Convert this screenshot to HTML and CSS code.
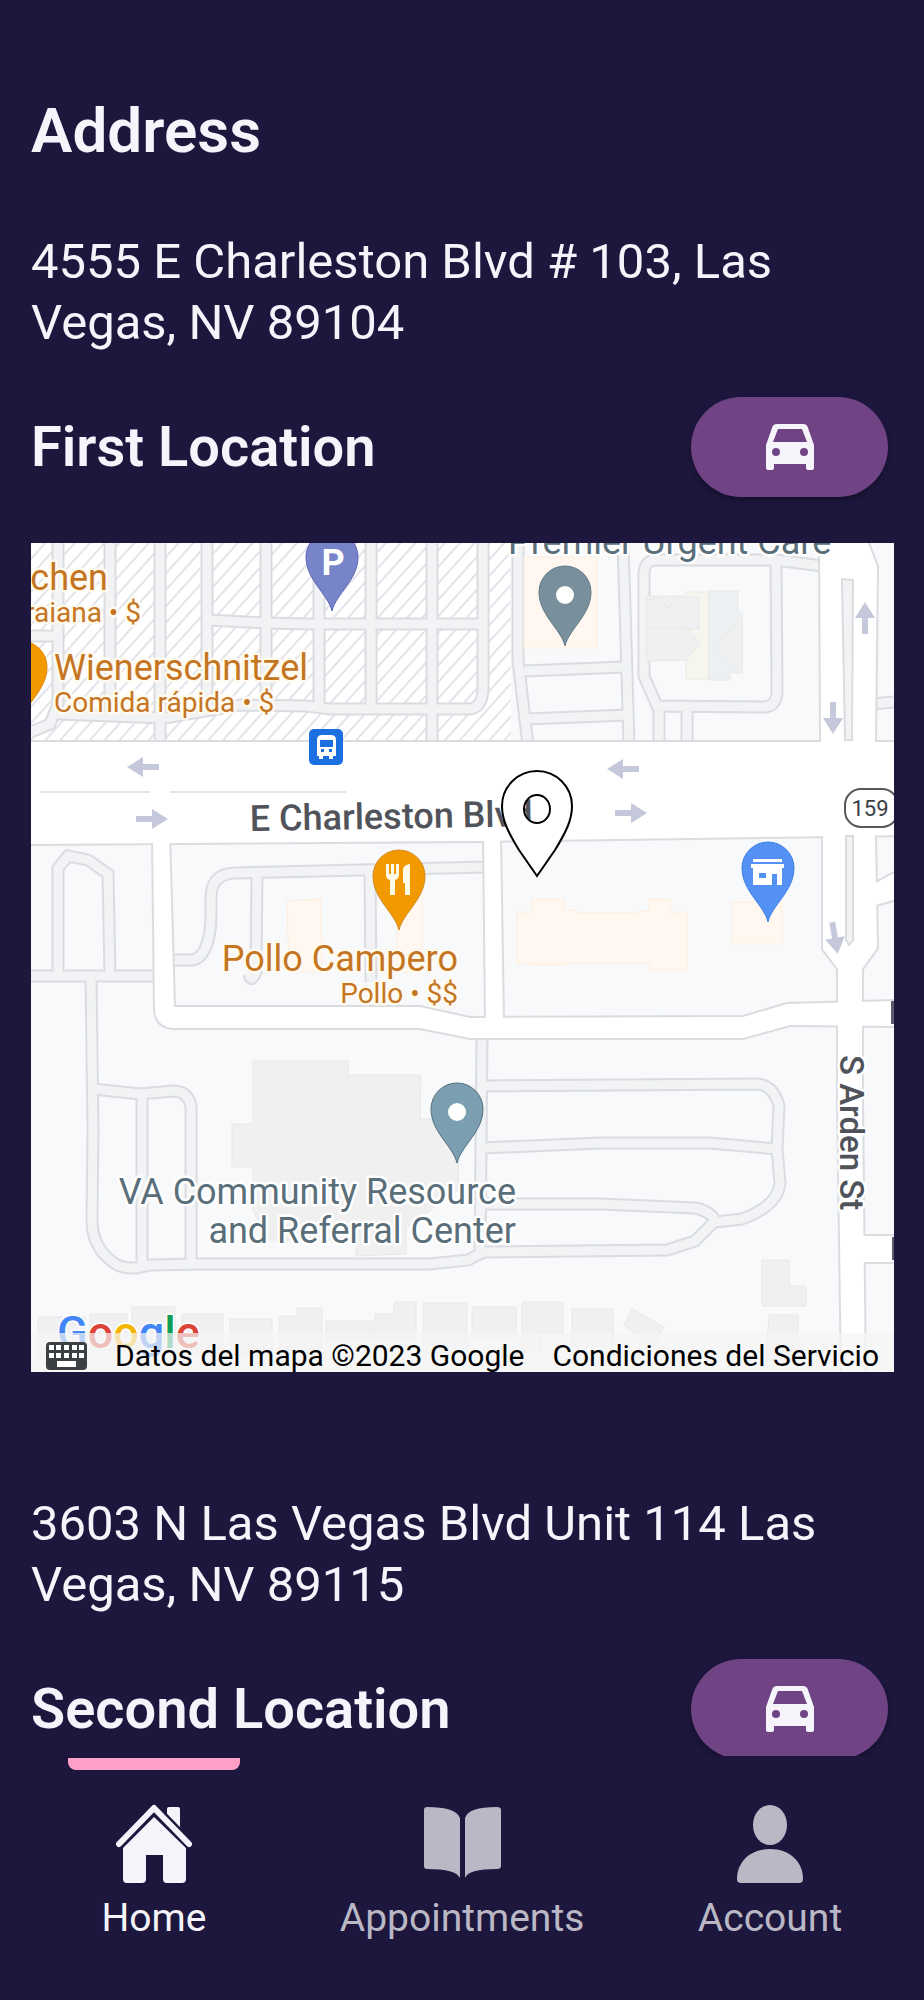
FILE: index.html
```html
<!DOCTYPE html>
<html lang="en">
<head>
  <meta charset="UTF-8" />
  <meta name="viewport" content="width=device-width, initial-scale=1" />
  <title>Address</title>
  <link rel="stylesheet" href="styles.css">
</head>
<body>
  <main class="content">
    <h1>Address</h1>

    <section class="location">
      <p class="address">4555 E Charleston Blvd # 103, Las Vegas, NV 89104</p>
      <div class="location-row">
        <h2>First Location</h2>
        <button class="drive-button" type="button" aria-label="Directions to first location">
          <svg class="car" viewBox="0 0 50 46">
            <path fill-rule="evenodd" d="M12 0h26q4 0 5 4l6 17v23q0 2-2 2h-4q-2 0-2-2v-4H9v4q0 2-2 2H3q-2 0-2-2V21L7 4q1-4 5-4zM13 5L8 18h34L37 5zM11 24a4 4 0 1 0 0 8 4 4 0 0 0 0-8zM39 24a4 4 0 1 0 0 8 4 4 0 0 0 0-8z"/>
          </svg>
        </button>
      </div>

      <div class="map">
        <svg class="map-canvas" viewBox="31 543 863 829">
          <defs>
            <pattern id="hatch" width="11" height="11" patternUnits="userSpaceOnUse" patternTransform="rotate(42)">
              <path d="M1 0v11" stroke="#e2e4e9" stroke-width="2"/>
            </pattern>
            <path id="pin" d="M0 51C-4 34-26 20-26-3A26 26 0 0 1 26-3C26 20 4 34 0 51z"/>
            <path id="arrow" d="M-16-3H0V-10L16 0 0 10V3H-16z"/>

            <!-- parking lanes -->
            <g id="lanes" fill="none">
              <path d="M31 636H58M58 543V704L50 724 31 732"/>
              <path d="M110 543V715M160 543V745M207 543V708M266 543V704M319 543V706M371 543V708M432 543V745"/>
              <path d="M207 620L267 623 310 624 483 624"/>
              <path d="M58 714L165 718 240 705 306 706 330 709H468Q482 709 483 690V543"/>
              <path d="M518 543V660L528 745M623 543L626 640 629 745M524 671L624 667M526 719L627 715"/>
              <path d="M822 566L776 560H656Q644 560 644 575V676L657 706 765 707Q777 706 777 690L776 560M659 706V745M687 707V745"/>
              <path d="M872 704L894 702"/>
              <path d="M31 976H158M58 976V868L68 856 88 860 108 874 110 976"/>
              <path d="M91 976L93 1130 92 1220Q92 1245 110 1260 120 1269 136 1268L150 1265 200 1264H430L468 1260 484 1252 667 1250 695 1241 714 1222"/>
              <path d="M93 1089L140 1094 173 1091Q188 1091 191 1106V1264M142 1094V1266"/>
              <path d="M170 960H192C208 958 211 930 211 915V896Q212 873 236 873L486 867M257 873L256 972Q251 984 249 974M370 872L371 982"/>
              <path d="M482 1036L480 1255M480 1086L758 1084Q774 1086 779 1106L777 1149 780 1183Q778 1206 742 1219L715 1222"/>
              <path d="M482 1148L600 1143 710 1143 777 1149M482 1204H600L695 1208Q711 1211 716 1222"/>
            </g>

            <!-- streets -->
            <g id="streets">
              <path d="M20 742H904V835L480 841 20 844z"/>
              <path d="M153 835H169L174 1007H420L470 1018 743 1017 787 1004 894 1001V1026L790 1025 743 1038H470L420 1028H172Q156 1026 155 1010z"/>
              <path d="M484 835H500L503 1022H486z"/>
              <path d="M820 533H864L877 566 875 742V835L877 948 862 969V1100L865 1382H842L838 1100V969L823 949V835L821 742z"/>
              <path d="M872 885L904 868V897L872 906zM860 1236H894V1262H860z"/>
            </g>
          </defs>

          <rect class="land" x="31" y="543" width="863" height="829"/>
          <path fill="#fff" d="M31 543H510L511 741H31z"/>
          <path fill="url(#hatch)" d="M31 543H510L511 741H31z"/>
          <path fill="none" stroke="#dadce0" stroke-width="2" d="M31 741H511"/>

          <use href="#lanes" class="lane-edge"/>
          <use href="#lanes" class="lane"/>
          <use href="#streets" class="street-edge"/>
          <use href="#streets" class="street"/>
          <path class="median" d="M842 579L853 580 852 740H845zM846 836H853V940L849 945 846 940z"/>
          <path stroke="#e6e7e9" stroke-width="2" d="M40 792H150M170 792H346"/>
          <path fill="#5a5c6c" d="M891 1001h3v23h-3zM892 1237h2v23h-2z"/>

          <!-- buildings -->
          <g class="shop-building">
            <path d="M524 557H597V648H524zM287 901L321 899 322 972H289zM397 895H422V972H397zM732 902H782V944H732z"/>
            <path d="M517 912H532V899H564V910H577V913H637V911H649V899H670V912H687V970H650V963H565V965H532V964H517z"/>
          </g>
          <g class="building">
            <path d="M647 596H699V629L686 660 646 661z"/>
            <path fill="#f6f5ee" d="M686 592H709V679H686z"/>
            <path fill="#edf0f2" d="M709 591H738V612H742V673H730V680H709z"/>
            <path d="M742 618L715 646 742 673zM646 628H687L700 643 686 660M647 600L659 598 668 608 680 597H699V629H687"/>
            <path d="M253 1061H348V1075H421L420 1119H460L458 1190 406 1228V1254L356 1256V1240H268L253 1210V1167H232V1124H253z"/>
            <path d="M38 1317H85V1357H38zM90 1314H127V1350H90zM132 1307H175V1350H132zM182 1314H223V1353H182zM230 1319H272V1355H230zM279 1316H297V1308H322V1350H279zM326 1321H373V1340H326zM375 1314H394V1302H416V1340H375zM423 1303H467V1353H423zM472 1307H516V1337H472zM522 1302H563V1333H541V1352H522zM572 1309H613V1347H572zM632 1309L664 1327 653 1347 624 1325z"/>
            <path d="M762 1260H789V1286H806V1306H762zM769 1315H798V1341H804V1360H766z"/>
          </g>

          <g class="arrows">
            <use href="#arrow" transform="translate(143 767) rotate(180)"/>
            <use href="#arrow" transform="translate(152 819)"/>
            <use href="#arrow" transform="translate(623 769) rotate(180)"/>
            <use href="#arrow" transform="translate(631 813)"/>
            <use href="#arrow" transform="translate(865 618) rotate(-90)"/>
            <use href="#arrow" transform="translate(833 718) rotate(90)"/>
            <use href="#arrow" transform="translate(835 938) rotate(80)"/>
          </g>

          <!-- place names -->
          <g class="label food">
            <text x="108" y="590" text-anchor="end">chen</text>
            <text class="small" x="141" y="622" text-anchor="end">raiana • $</text>
            <text x="54" y="680">Wienerschnitzel</text>
            <text class="small" x="54" y="712">Comida rápida • $</text>
            <text x="458" y="971" text-anchor="end">Pollo Campero</text>
            <text class="small" x="458" y="1003" text-anchor="end">Pollo • $$</text>
          </g>
          <g class="label place">
            <text x="508" y="554">Premier Urgent Care</text>
            <text x="516" y="1204" text-anchor="end">VA Community Resource</text>
            <text x="516" y="1243" text-anchor="end">and Referral Center</text>
          </g>
          <g class="label road-name">
            <text transform="translate(250 831) rotate(-1)">E Charleston Blvd</text>
            <text class="street-name" transform="translate(840 1055) rotate(90)">S Arden St</text>
          </g>

          <!-- pins -->
          <g transform="translate(332 560)">
            <use href="#pin" fill="#7884ca" stroke="#5b67b4"/>
            <text class="parking" x="1" y="15" text-anchor="middle">P</text>
          </g>
          <g transform="translate(565 595)">
            <use href="#pin" fill="#78909c" stroke="#5f7a88"/>
            <circle r="9" fill="#fff"/>
          </g>
          <use href="#pin" fill="#f29900" stroke="#d98600" transform="translate(21 670)"/>
          <g transform="translate(399 879)">
            <use href="#pin" fill="#f29900" stroke="#d08a20"/>
            <path fill="#fffbe8" d="M-13-15h3v10h2v-10h3v10h2v-10h3v11q0 4-4 5V16h-5V1q-4-1-4-5zM4-9q0-5 7-6V16H6V4H4z"/>
          </g>
          <g transform="translate(768 871)">
            <use href="#pin" fill="#5491f5" stroke="#4280e4"/>
            <path fill="#fff" fill-rule="evenodd" d="M-15-12h29v3h-29zM-17-7h33v4h-2v17h-5V3H4v11h-19V-3h-2zM-9 2v5h7V2z"/>
          </g>
          <g transform="translate(457 1112)">
            <use href="#pin" fill="#7b9eb0" stroke="#54717f"/>
            <circle r="9" fill="#fff"/>
          </g>

          <rect x="309" y="729" width="34" height="36" rx="5" fill="#1b6fe0"/>
          <path fill="#fff" fill-rule="evenodd" d="M322 735h9q5 0 5 5v16h-3v3h-4v-3h-6v3h-4v-3h-2v-16q0-5 5-5zM320 740v7h13v-7zM321 749v3h3v-3zM329 749v3h3v-3z"/>

          <rect x="845" y="789" width="53" height="38" rx="16" fill="#fff" stroke="#55585c" stroke-width="2"/>
          <text class="route" x="870" y="816" text-anchor="middle">159</text>

          <path fill="#fff" fill-rule="evenodd" stroke="#000" stroke-width="2" d="M537 876L519 850C508 832 502 820 502 806A35 35 0 0 1 572 806C572 820 566 832 555 850zM537 795a13 14 0 1 0 0 28 13 14 0 0 0 0-28z"/>

          <text class="brand" x="57" y="1348"><tspan fill="#4285f4">G</tspan><tspan fill="#db4437">o</tspan><tspan fill="#f4b400">o</tspan><tspan fill="#4285f4">g</tspan><tspan fill="#0f9d58">l</tspan><tspan fill="#db4437">e</tspan></text>
        </svg>

        <div class="map-bar">
          <button class="keys-button" type="button" aria-label="Keyboard shortcuts">
            <svg class="keys" viewBox="0 0 41 28">
              <rect width="41" height="28" rx="4" fill="#3c4043"/>
              <path fill="#fff" d="M3 3h5v5H3zM10 3h5v5h-5zM18 3h5v5h-5zM26 3h5v5h-5zM33 3h5v5h-5zM3 11h5v5H3zM10 11h5v5h-5zM18 11h5v5h-5zM26 11h5v5h-5zM33 11h5v5h-5zM11 19h19v6H11z"/>
            </svg>
          </button>
          <span lang="es">Datos del mapa ©2023 Google</span>
          <a href="#terms" lang="es">Condiciones del Servicio</a>
        </div>
      </div>
    </section>

    <section class="location">
      <p class="address">3603 N Las Vegas Blvd Unit 114 Las Vegas, NV 89115</p>
      <div class="location-row">
        <h2>Second Location</h2>
        <button class="drive-button" type="button" aria-label="Directions to second location">
          <svg class="car" viewBox="0 0 50 46">
            <path fill-rule="evenodd" d="M12 0h26q4 0 5 4l6 17v23q0 2-2 2h-4q-2 0-2-2v-4H9v4q0 2-2 2H3q-2 0-2-2V21L7 4q1-4 5-4zM13 5L8 18h34L37 5zM11 24a4 4 0 1 0 0 8 4 4 0 0 0 0-8zM39 24a4 4 0 1 0 0 8 4 4 0 0 0 0-8z"/>
          </svg>
        </button>
      </div>
    </section>
  </main>

  <nav class="tab-bar">
    <a class="tab active" href="#home">
      <svg class="tab-icon" viewBox="0 0 80 80">
        <path d="M53 5q0-2 2-2h9q2 0 2 2v23L53 15z"/>
        <path d="M5 41L40 5 75 41" fill="none" stroke="#1d173e" stroke-width="12"/>
        <path d="M5 40L40 4 75 40" fill="none" stroke="currentColor" stroke-width="6" stroke-linecap="round" stroke-linejoin="round"/>
        <path d="M40 13L72 44V75q0 4-4 4H53q-4 0-4-4V51H32V75q0 4-4 4H13q-4 0-4-4V44z"/>
      </svg>
      Home
    </a>
    <a class="tab" href="#appointments">
      <svg class="tab-icon" viewBox="0 0 80 80">
        <path d="M5 3Q34 3 38 14V74Q34 65 5 65 2 65 2 62V6Q2 3 5 3zM75 3Q46 3 43 14V74Q46 65 75 65 79 65 79 62V6Q79 3 75 3z"/>
      </svg>
      Appointments
    </a>
    <a class="tab" href="#account">
      <svg class="tab-icon" viewBox="0 0 80 80">
        <ellipse cx="40" cy="21" rx="17" ry="20"/>
        <path d="M40 45C60 45 73 58 73 75Q73 79 69 79H11Q7 79 7 75C7 58 20 45 40 45z"/>
      </svg>
      Account
    </a>
  </nav>
</body>
</html>
```
FILE: styles.css
```css
:root {
  --bg: #1d173e;
  --text: #f4f4fa;
  --muted: #bbb8c6;
  --accent: #704385;
  --pink: #ffa0c8;
}

* {
  margin: 0;
  padding: 0;
  box-sizing: border-box;
}

body {
  display: flex;
  flex-direction: column;
  height: 100vh;
  font-family: Roboto, "Liberation Sans", sans-serif;
  background: var(--bg);
  color: var(--text);
}

.content {
  flex: 1;
  min-height: 0;
  overflow: hidden;
  padding: 92px 30px 0 31px;
}

h1 {
  font-size: 62px;
  line-height: 78px;
  font-weight: 600;
  margin-bottom: 61px;
}

h2 {
  font-size: 56px;
  line-height: 70px;
  font-weight: 600;
}

.location {
  margin-bottom: 121px;
}

.address {
  font-size: 49px;
  line-height: 61px;
}

.location-row {
  display: flex;
  align-items: center;
  justify-content: space-between;
  padding-right: 6px;
  margin: 44px 0 46px;
}

.drive-button {
  display: flex;
  align-items: center;
  justify-content: center;
  width: 197px;
  height: 100px;
  border: none;
  border-radius: 50px;
  background: var(--accent);
  color: var(--text);
  box-shadow: 0 3px 6px rgba(0, 0, 0, 0.35);
  cursor: pointer;
}

.car {
  width: 50px;
  height: 46px;
  fill: currentColor;
}

/* Map */
.map {
  position: relative;
  overflow: hidden;
}

.map-canvas {
  display: block;
  width: 100%;
}

.land {
  fill: #f8f9fb;
}

.lane-edge {
  stroke: #dadce0;
  stroke-width: 13;
}

.lane {
  stroke: #f1f3f4;
  stroke-width: 9;
}

.street-edge {
  fill: #dadce0;
  stroke: #dadce0;
  stroke-width: 4;
}

.street {
  fill: #fff;
}

.median {
  fill: #f1f3f4;
  stroke: #dadce0;
  stroke-width: 2;
}

.building {
  fill: #f0f0f0;
  stroke: #e8e8e8;
}

.shop-building {
  fill: #fff7f0;
  stroke: #fdeedd;
}

.arrows {
  fill: #c5c8da;
}

.label {
  font-size: 36px;
  stroke: #fff;
  stroke-width: 5px;
  stroke-linejoin: round;
  paint-order: stroke;
}

.label .small {
  font-size: 28px;
}

.food {
  fill: #c5751f;
  stroke: #fffaf0;
}

.place {
  fill: #5a6f79;
}

.road-name {
  fill: #50545a;
  font-weight: 500;
}

.label .street-name {
  font-size: 33px;
}

.parking {
  font-size: 36px;
  font-weight: 700;
  fill: #fff;
}

.route {
  font-size: 22px;
  fill: #3c4043;
}

.brand {
  font-size: 45px;
  font-weight: 500;
  stroke: #fff;
  stroke-width: 3px;
  paint-order: stroke;
}

.map-bar {
  position: absolute;
  left: 0;
  right: 0;
  bottom: 0;
  display: flex;
  align-items: center;
  justify-content: space-between;
  height: 39px;
  padding: 7px 15px 0;
  background: rgba(245, 245, 245, 0.7);
  color: #000;
  font-size: 30px;
  line-height: 32px;
  white-space: nowrap;
}

.map-bar a {
  color: inherit;
  text-decoration: none;
}

.keys-button {
  border: none;
  background: none;
}

.keys {
  display: block;
  width: 41px;
  height: 28px;
}

/* Bottom tabs */
.tab-bar {
  display: flex;
  height: 244px;
  background: var(--bg);
  border-top: 1px solid #191437;
}

.tab {
  position: relative;
  flex: 1;
  display: flex;
  flex-direction: column;
  align-items: center;
  gap: 12px;
  padding-top: 47px;
  color: var(--muted);
  font-size: 39px;
  line-height: 44px;
  text-decoration: none;
}

.tab.active {
  color: var(--text);
}

.tab.active::before {
  content: "";
  position: absolute;
  top: 1px;
  left: 22%;
  right: 22%;
  height: 12px;
  border-radius: 0 0 8px 8px;
  background: var(--pink);
}

.tab-icon {
  width: 80px;
  height: 80px;
  fill: currentColor;
}
```
